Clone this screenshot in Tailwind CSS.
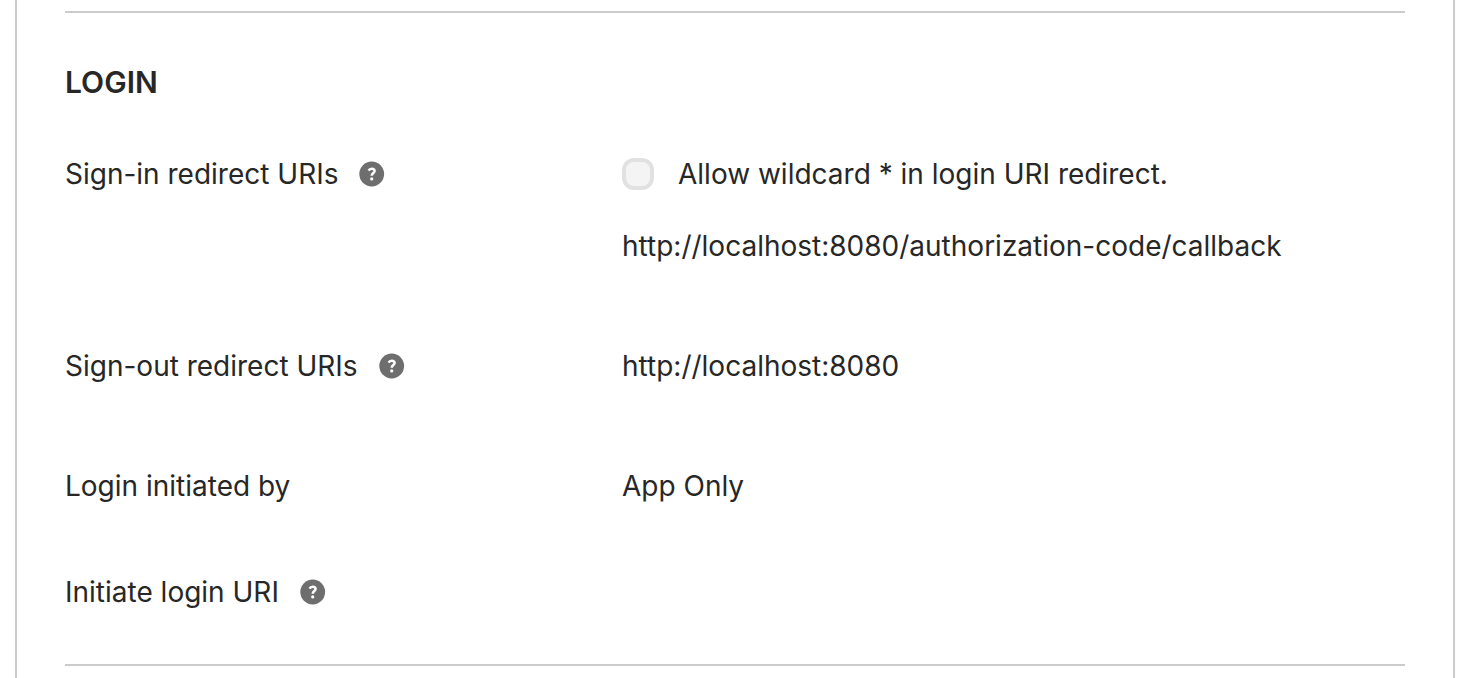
<!DOCTYPE html>
<html lang="en">
<head>
<meta charset="utf-8">
<title>Login settings</title>
<script src="https://cdn.jsdelivr.net/npm/@tailwindcss/browser@4"></script>
</head>
<body class="bg-white pr-[17px] pl-[15px] font-['Inter',sans-serif] text-[28px] leading-9 text-[#272727]">
<svg class="hidden" aria-hidden="true">
  <symbol id="help" viewBox="0 0 26 26">
    <circle cx="12.7" cy="13" r="12.4" fill="#6e6e6e"/>
    <path d="M9.6 9.6C10.2 8.4 11.4 7.7 12.8 7.7c1.7 0 2.8.9 2.8 2.3 0 2-2.9 2.1-2.9 4.8" fill="none" stroke="#fff" stroke-width="2.5"/>
    <circle cx="12.7" cy="17.9" r="1.6" fill="#fff"/>
  </symbol>
</svg>
<main class="min-h-screen border-x-2 border-[#cbcbcb] px-12 pt-[11px]">
  <section class="border-y-2 border-[#cbcbcb] pt-[49px] pb-[54px]">
    <h2 class="text-[30px] leading-10 font-semibold">LOGIN</h2>
    <dl class="mt-[54px] grid grid-cols-[557px_1fr]">
      <dt class="flex h-9 items-center gap-[21px]">Sign-in redirect URIs <button type="button" aria-label="Help: Sign-in redirect URIs"><svg class="size-[26px]"><use href="#help"/></svg></button></dt>
      <dd>
        <label class="flex items-center gap-6"><input type="checkbox" class="size-8 appearance-none rounded-xl border-4 border-[#e1e1e1] bg-[#f4f4f4]">Allow wildcard * in login URI redirect.</label>
        <p class="mt-9">http://localhost:8080/authorization-code/callback</p>
      </dd>
      <dt class="mt-21 flex h-9 items-center gap-[21px]">Sign-out redirect URIs <button type="button" aria-label="Help: Sign-out redirect URIs"><svg class="size-[26px]"><use href="#help"/></svg></button></dt>
      <dd class="mt-21">http://localhost:8080</dd>
      <dt class="mt-21">Login initiated by</dt>
      <dd class="mt-21">App Only</dd>
      <dt class="mt-[70px] flex h-9 items-center gap-[21px]">Initiate login URI <button type="button" aria-label="Help: Initiate login URI"><svg class="size-[26px]"><use href="#help"/></svg></button></dt>
      <dd></dd>
    </dl>
  </section>
</main>
</body>
</html>
